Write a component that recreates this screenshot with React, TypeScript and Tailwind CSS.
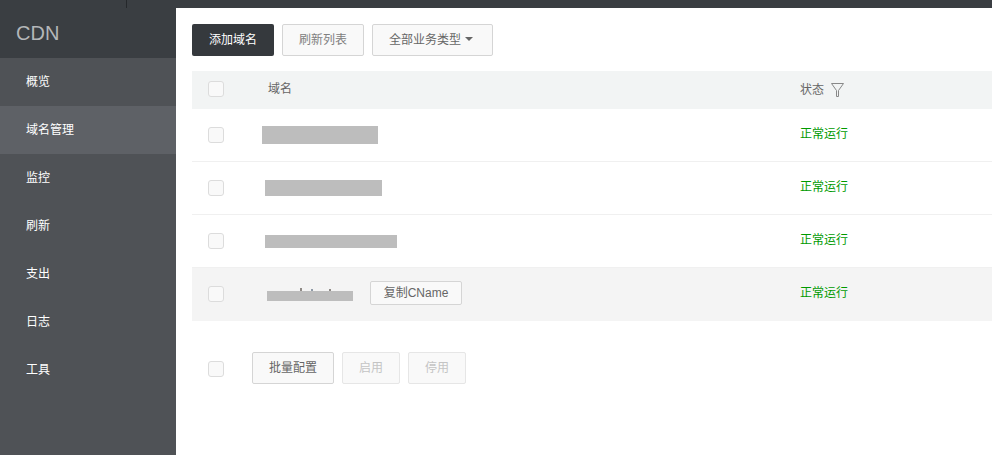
const navItems = ["概览", "域名管理", "监控", "刷新", "支出", "日志", "工具"];

const rows = [
  { bar: "ml-[-6px] w-[116px] h-[18px]" },
  { bar: "ml-[-3px] w-[117px] h-[16px]" },
  { bar: "ml-[-3px] w-[132px] h-[13px] mt-px" },
];

function Check({ className = "" }: { className?: string }) {
  return <div className={`w-4 h-4 rounded-[3px] border border-[#dcdcdc] bg-[#f9f9f9] ${className}`} />;
}

function Btn({ children, className = "" }: { children: React.ReactNode; className?: string }) {
  return (
    <button className={`h-8 rounded-[2px] border border-[#d5d5d5] bg-[#f9f9f9] text-[#666] text-xs ${className}`}>
      {children}
    </button>
  );
}

export default function App() {
  return (
    <div className="w-[992px] h-[455px] overflow-hidden flex flex-col bg-white font-['Liberation_Sans','Noto_Sans_CJK_SC',sans-serif] text-xs">
      <div className="h-2 bg-[#3a3e42] shrink-0">
        <div className="ml-[126px] w-px h-2 bg-[#25282b]" />
      </div>
      <div className="flex flex-1 min-h-0">
        <aside className="w-[176px] shrink-0 bg-[#4f5256]">
          <div className="h-[50px] bg-[#3a3e42] pl-4 flex items-center text-[20px] text-[#b4b7b9]">CDN</div>
          {navItems.map((item, i) => (
            <div
              key={item}
              className={`h-12 pl-[26px] flex items-center text-white ${i === 1 ? "bg-[#5e6166]" : ""}`}
            >
              {item}
            </div>
          ))}
        </aside>
        <main className="flex-1 min-w-0 pl-4 pt-4">
          <div className="flex gap-2">
            <button className="h-8 w-[82px] rounded-[2px] bg-[#35393d] text-white text-xs">添加域名</button>
            <Btn className="w-[82px] text-[#808080]">刷新列表</Btn>
            <Btn className="w-[121px] pl-4 flex items-center gap-[4px]">
              全部业务类型
              <span className="w-0 h-0 mb-0.5 border-x-[4px] border-x-transparent border-t-[4px] border-t-[#666]" />
            </Btn>
          </div>
          <div className="mt-[15px] h-[38px] bg-[#f2f4f4] flex items-center text-[#666]">
            <div className="w-[76px] pl-4"><Check className="mb-0.5" /></div>
            <div className="w-[532px] pb-0.5">域名</div>
            <div className="flex items-center gap-[7px]">
              状态
              <svg width="13" height="14" viewBox="0 0 13 14" fill="none" stroke="#888" strokeWidth="1">
                <path d="M0.5 0.5H12.5L7.5 7.5V13.5H5.5V7.5Z" />
              </svg>
            </div>
          </div>
          {rows.map((r, i) => (
            <div key={i} className="h-[53px] border-b border-[#f0f0f0] flex items-center">
              <div className="w-[76px] pl-4"><Check /></div>
              <div className="w-[532px]"><div className={`bg-[#bdbdbd] ${r.bar}`} /></div>
              <div className="text-[#009a00] pb-0.5">正常运行</div>
            </div>
          ))}
          <div className="h-[53px] border-b border-transparent bg-[#f4f4f4] flex items-center">
            <div className="w-[76px] pl-4"><Check /></div>
            <div className="w-[532px] flex items-center">
              <div className="relative w-[86px] h-[10px] bg-[#bdbdbd] -ml-px mt-1">
                <span className="absolute left-[33px] top-[-3px] w-[2px] h-[3px] bg-[#8f8a86]" />
                <span className="absolute left-[44px] top-[-2px] w-[2px] h-[2px] bg-[#8f9aa6]" />
                <span className="absolute left-[62px] top-[-2px] w-[2px] h-[2px] bg-[#8f8a86]" />
              </div>
              <button className="ml-[17px] mb-0.5 w-[92px] h-6 rounded-[2px] border border-[#d5d5d5] bg-[#f9f9f9] text-[#666] text-xs">复制CName</button>
            </div>
            <div className="text-[#009a00] pb-0.5">正常运行</div>
          </div>
          <div className="mt-[31px] flex items-center">
            <div className="w-[60px] pl-4"><Check className="mt-0.5" /></div>
            <div className="flex gap-2">
              <Btn className="w-[82px]">批量配置</Btn>
              <Btn className="w-[58px] border-[#e6e6e6] text-[#c4c4c4]">启用</Btn>
              <Btn className="w-[58px] border-[#e6e6e6] text-[#c4c4c4]">停用</Btn>
            </div>
          </div>
        </main>
      </div>
    </div>
  );
}
